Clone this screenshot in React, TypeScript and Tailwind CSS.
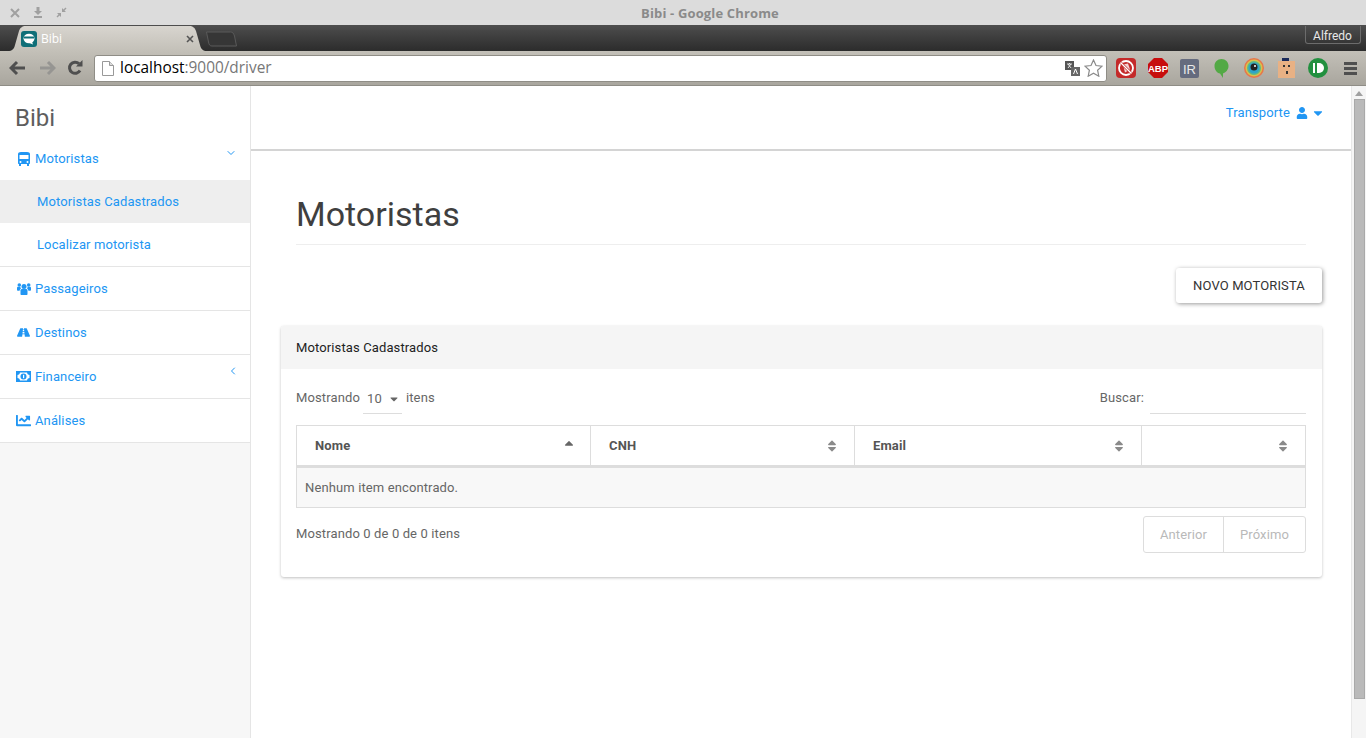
import { FaRoad, FaChartLine, FaUser, FaCaretDown, FaCaretUp, FaSort } from 'react-icons/fa';
import { FiChevronDown, FiChevronLeft } from 'react-icons/fi';
import { ReactNode } from 'react';

function WindowTitleBar() {
  return (
    <div className="relative flex h-[25px] items-center bg-[#dcdcdc] pl-[10px] text-[#9a9a9a]">
      <div className="flex items-center gap-[13px]">
        <svg width="10" height="10" viewBox="0 0 10 10"><path d="M1 1l8 8M9 1l-8 8" stroke="#a0a0a0" strokeWidth="2" /></svg>
        <svg width="10" height="11" viewBox="0 0 10 11"><path d="M3.500 0h3v4H9L5 8 1 4h2.500zM1 9h8v2H1z" fill="#a0a0a0" /></svg>
        <svg width="11" height="11" viewBox="0 0 11 11"><path d="M6 5V1l1.500 1.500L9.500 .5l1 1-2 2L10 5zM5 6v4L3.500 8.500l-2 2-1-1 2-2L1 6z" fill="#a0a0a0" /></svg>
      </div>
      <div className="absolute inset-x-0 top-0 flex h-[25px] items-center justify-center pl-[54px] pt-[2px] text-[13px] font-bold tracking-[0.15px] text-[#8a8a8a] font-['Open_Sans',sans-serif]">
        Bibi - Google Chrome
      </div>
    </div>
  );
}

function TabStrip() {
  return (
    <div className="flex h-[26px] items-end justify-between bg-gradient-to-b from-[#4e4e4e] to-[#2c2c2c] pl-[8px] pr-[5px]">
      <div className="flex items-end">
        <div className="relative flex h-[25px] w-[199px] items-center pl-[13px] pr-[13px]">
          <svg className="absolute inset-0" width="199" height="25" viewBox="0 0 199 25">
            <defs>
              <linearGradient id="tabfill" x1="0" y1="0" x2="0" y2="1">
                <stop offset="0" stopColor="#d8d5cf" />
                <stop offset="1" stopColor="#c3c0b8" />
              </linearGradient>
            </defs>
            <path d="M0 25c4 0 6-2 7-6L11 5c1-3 3-5 7-5h163c4 0 6 2 7 5l4 14c1 4 3 6 7 6z" fill="url(#tabfill)" />
          </svg>
          <svg className="relative" width="16" height="16" viewBox="0 0 16 16">
            <rect width="16" height="16" rx="3" fill="#0f6f78" />
            <ellipse cx="8" cy="7.500" rx="5.500" ry="4.800" fill="#fff" />
            <path d="M3 5.500h10v2H3z" fill="#0f6f78" />
            <path d="M6 11l6 2.500-1.500-4z" fill="#fff" />
          </svg>
          <span className="relative ml-[4px] flex-1 text-[12px] text-white font-['Open_Sans',sans-serif]">Bibi</span>
          <svg className="relative" width="8" height="8" viewBox="0 0 8 8"><path d="M1 1l6 6M7 1L1 7" stroke="#555" strokeWidth="1.600" /></svg>
        </div>
        <svg className="mb-[4px] ml-[-1px]" width="32" height="16" viewBox="0 0 32 16">
          <path d="M.5 1h24c2 0 3 1 4 4l2 10H6C4 15 3 14 2.500 11z" fill="#363636" stroke="#5a5a5a" />
        </svg>
      </div>
      <div className="mb-[7px] flex h-[18px] w-[56px] items-center justify-center rounded-b-[3px] border border-t-0 border-[#6c6c6c] pt-[2px] pr-[1px] text-[12px] text-[#e8e8e8]">
        Alfredo
      </div>
    </div>
  );
}

function NavIcons() {
  return (
    <div className="flex items-center pl-[9px]">
      <svg width="18" height="16" viewBox="0 0 18 16"><path d="M8 2L2 8l6 6M2 8h14" fill="none" stroke="#4f4f4f" strokeWidth="3" /></svg>
      <svg className="ml-[11px]" width="18" height="16" viewBox="0 0 18 16"><path d="M10 2l6 6-6 6M16 8H2" fill="none" stroke="#969592" strokeWidth="3" /></svg>
      <svg className="ml-[11px]" width="16" height="16" viewBox="0 0 16 16">
        <path d="M13 10.500A5.600 5.600 0 1 1 12 3.700" fill="none" stroke="#4f4f4f" strokeWidth="3" />
        <path d="M9 6.500h6.500V0z" fill="#4f4f4f" />
      </svg>
    </div>
  );
}

function ExtensionIcons() {
  return (
    <div className="flex items-center">
      <svg width="20" height="20" viewBox="0 0 20 20">
        <rect width="20" height="20" rx="4" fill="#c42a2a" />
        <circle cx="10" cy="10" r="7" fill="none" stroke="#fff" strokeWidth="1.800" />
        <path d="M7 6.500l5-1 2 6-5 3z" fill="#fff" opacity=".8" />
        <path d="M5 5l10 10" stroke="#c42a2a" strokeWidth="2.500" />
        <path d="M5 5l10 10" stroke="#fff" strokeWidth="1.200" />
      </svg>
      <svg className="ml-[12px]" width="20" height="20" viewBox="0 0 20 20">
        <path d="M6 0h8l6 6v8l-6 6H6l-6-6V6z" fill="#c70d0d" />
        <text x="10" y="13.500" textAnchor="middle" fontSize="9.500" fontWeight="700" fill="#fff" fontFamily="Liberation Sans, sans-serif">ABP</text>
      </svg>
      <svg className="ml-[12px]" width="19" height="19" viewBox="0 0 19 19">
        <rect width="19" height="19" rx="2" fill="#656b7e" />
        <text x="9.500" y="14.500" textAnchor="middle" fontSize="13" fill="#e9e9e9" fontFamily="Liberation Sans, sans-serif">IR</text>
      </svg>
      <svg className="ml-[15px]" width="15" height="20" viewBox="0 0 15 20">
        <path d="M7.500 1C11.500 1 14.500 4 14.500 8c0 4-3 6.500-5.500 7.500V20L6 15.500C3 15 .5 12 .5 8 .5 4 3.500 1 7.500 1z" fill="#53a945" />
      </svg>
      <svg className="ml-[15px]" width="20" height="20" viewBox="0 0 20 20">
        <circle cx="10" cy="10" r="10" fill="#e8764a" />
        <circle cx="10" cy="10" r="8.500" fill="#d8c24a" />
        <circle cx="10" cy="10" r="7" fill="#5cb88a" />
        <circle cx="10" cy="10" r="5.500" fill="#2fa4c8" />
        <circle cx="10" cy="9" r="3.500" fill="#222" />
        <circle cx="11" cy="8" r="1" fill="#fff" />
      </svg>
      <svg className="ml-[14px]" width="17" height="20" viewBox="0 0 17 20">
        <rect y="3" width="17" height="17" fill="#e8b184" />
        <rect x="4" y="0" width="7" height="3" fill="#1a2a5a" />
        <rect x="5" y="7" width="2" height="2" fill="#333" />
        <rect x="10" y="7" width="2" height="2" fill="#333" />
        <rect x="8" y="13" width="2" height="3" fill="#333" />
      </svg>
      <svg className="ml-[13px]" width="20" height="20" viewBox="0 0 20 20">
        <circle cx="10" cy="10" r="10" fill="#22903f" />
        <rect x="5" y="5" width="2" height="10" fill="#fff" />
        <path d="M9 5h2a5 5 0 0 1 0 10H9z" fill="#fff" />
      </svg>
      <div className="ml-[16px] flex w-[13px] flex-col gap-[2px]">
        <div className="h-[3px] bg-[#4f4f4f]" />
        <div className="h-[3px] bg-[#4f4f4f]" />
        <div className="h-[3px] bg-[#4f4f4f]" />
      </div>
    </div>
  );
}

function Toolbar() {
  return (
    <div className="flex h-[35px] items-center border-b border-[#8f8d86] bg-gradient-to-b from-[#c3c0b8] to-[#a9a69e] pr-[9px]">
      <NavIcons />
      <div className="ml-[11px] flex h-[27px] w-[1013px] items-center rounded-[3px] border border-[#8f8d86] bg-white pl-[7px] pr-[3px] font-['Open_Sans',sans-serif]">
        <svg width="12" height="15" viewBox="0 0 12 15"><path d="M.5.500h7l4 4v10H.500z" fill="#fff" stroke="#999" /><path d="M7.500.500v4h4" fill="#ddd" stroke="#999" /></svg>
        <div className="ml-[6px] flex-1 text-[15.400px] leading-none">
          <span className="text-black">localhost</span>
          <span className="text-[#777]">:9000/driver</span>
        </div>
        <svg width="15" height="15" viewBox="0 0 15 15">
          <rect width="9" height="9" fill="#555" />
          <rect x="6" y="6" width="9" height="9" fill="#666" />
          <path d="M2 3h5M4.500 2v1M3 7l3-4M3 3l3 4" stroke="#fff" strokeWidth=".8" />
          <path d="M8.500 13l2-5 2 5" stroke="#fff" fill="none" />
        </svg>
        <svg className="ml-[4px]" width="19" height="18" viewBox="0 0 19 18"><path d="M9.500 1l2.500 5.500 6 .7-4.400 4 1.200 6-5.300-3-5.300 3 1.200-6L1 7.200l6-.7z" fill="#fff" stroke="#8a8a8a" strokeWidth="1.200" /></svg>
      </div>
      <div className="flex-1" />
      <ExtensionIcons />
    </div>
  );
}

function BusIcon() {
  return (
    <svg width="12" height="14" viewBox="0 0 12 14">
      <path fillRule="evenodd" d="M3 0h6c1.800 0 3 .8 3 2v9c0 .6-.4 1-1 1v2H9v-2H3v2H1v-2c-.6 0-1-.4-1-1V2C0 .8 1.200 0 3 0zM1.500 3v4h9V3zM2.500 9a1 1 0 1 0 0 2 1 1 0 0 0 0-2zm7 0a1 1 0 1 0 0 2 1 1 0 0 0 0-2z" fill="#2196f3" />
    </svg>
  );
}

function UsersIcon() {
  return (
    <svg width="14" height="12" viewBox="0 0 14 12" fill="#2196f3">
      <circle cx="7" cy="3.500" r="2.500" />
      <circle cx="2.300" cy="2" r="1.800" />
      <circle cx="11.700" cy="2" r="1.800" />
      <path d="M3.500 7.500c0-1 .8-1.500 1.500-1.500h4c.7 0 1.500.5 1.500 1.500V11c0 .6-.4 1-1 1h-5c-.6 0-1-.4-1-1z" />
      <path d="M0 5c0-.8.500-1.200 1.200-1.200h2.300c-.2.800 0 1.500.5 2-.8.300-1.300 1-1.400 2H.8C.3 7.800 0 7.500 0 7zM14 5c0-.8-.5-1.200-1.200-1.200h-2.300c.2.800 0 1.500-.5 2 .8.300 1.300 1 1.400 2h1.800c.5 0 .8-.3.800-.8z" />
    </svg>
  );
}

function MoneyIcon() {
  return (
    <svg width="15" height="11" viewBox="0 0 15 11">
      <rect x=".75" y=".75" width="13.500" height="9.500" fill="#fff" stroke="#2196f3" strokeWidth="1.500" />
      <path d="M1 1h3a3 3 0 0 1-3 3zM14 1h-3a3 3 0 0 0 3 3zM1 10h3a3 3 0 0 0-3-3zM14 10h-3a3 3 0 0 1 3-3z" fill="#2196f3" />
      <circle cx="7.500" cy="5.500" r="3" fill="#2196f3" />
      <rect x="7" y="3.800" width="1.200" height="3.400" fill="#fff" />
    </svg>
  );
}

function NavRow({ icon, label, caret }: { icon: ReactNode; label: string; caret?: ReactNode }) {
  return (
    <div className="relative flex h-[44px] items-center border-b border-[#e5e5e5] pl-[16px] text-[#2196f3]">
      <span className="flex w-[19px] items-center text-[14px]">{icon}</span>
      {label}
      {caret}
    </div>
  );
}

function Sidebar() {
  return (
    <div className="flex w-[251px] shrink-0 flex-col border-r border-[#e5e5e5] bg-[#f7f7f7] text-[13px] tracking-[0.12px]">
      <div className="bg-white">
        <div className="flex h-[51px] items-end pl-[15px] text-[24px] leading-[28px] tracking-normal text-[#5e5e5e]">
          <span className="pb-[5px]">Bibi</span>
        </div>
        <div className="relative flex h-[43px] items-center pl-[18px] text-[#2196f3]">
          <span className="flex w-[17px] items-center"><BusIcon /></span>
          Motoristas
          <FiChevronDown className="absolute right-[13px] top-[10px] text-[12px]" />
        </div>
        <div className="flex h-[43px] items-center bg-[#eeeeee] pl-[37px] text-[#2196f3]">Motoristas Cadastrados</div>
        <div className="flex h-[44px] items-center border-b border-[#e5e5e5] pl-[37px] text-[#2196f3]">Localizar motorista</div>
        <NavRow icon={<span className="ml-[1px]"><UsersIcon /></span>} label="Passageiros" />
        <NavRow icon={<span className="ml-[1px] text-[13px]"><FaRoad /></span>} label="Destinos" />
        <NavRow icon={<MoneyIcon />} label="Financeiro" caret={<FiChevronLeft className="absolute right-[11px] top-[10px] text-[12px]" />} />
        <NavRow icon={<span className="text-[15px]"><FaChartLine /></span>} label="Análises" />
      </div>
    </div>
  );
}

function SortHeader({ label, width, active }: { label?: string; width: string; active?: boolean }) {
  return (
    <div className={`flex h-full items-center justify-between border-r border-[#dddddd] pl-[18px] pr-[15px] last:border-r-0 font-bold ${width}`}>
      <span>{label}</span>
      {active ? <FaCaretUp className="mb-[6px] mr-[-1px] text-[14px] text-[#666]" /> : <FaSort className="text-[14px] text-[#8a8a8a]" />}
    </div>
  );
}

function DriversCard() {
  return (
    <div className="ml-[30px] mr-[29px] mt-[23px] rounded-[3px] bg-white shadow-[0_1px_3px_rgba(0,0,0,0.25)]">
      <div className="flex h-[43px] items-center rounded-t-[3px] bg-[#f5f5f5] pl-[15px] text-[13px] tracking-[0.12px] text-[#222]">Motoristas Cadastrados</div>
      <div className="pb-[24px] pl-[15px] pr-[16px] text-[13px] tracking-[0.12px] text-[#666]">
        <div className="flex h-[45px] items-end justify-between">
          <div className="flex items-center">
            <span>Mostrando</span>
            <div className="ml-[3px] mr-[4px] flex h-[32px] w-[39px] items-center justify-between border-b border-[#dddddd] pl-[4px] pr-[2px] pt-[2px]">
              10 <FaCaretDown className="text-[12px]" />
            </div>
            <span>itens</span>
          </div>
          <div className="flex items-center">
            <span>Buscar:</span>
            <div className="ml-[6px] h-[32px] w-[156px] border-b border-[#dddddd]" />
          </div>
        </div>
        <div className="mt-[11px] border border-[#dddddd]">
          <div className="flex h-[42px] border-b-[3px] border-[#dddddd] text-[#555]">
            <SortHeader label="Nome" width="w-[294px]" active />
            <SortHeader label="CNH" width="w-[264px]" />
            <SortHeader label="Email" width="w-[287px]" />
            <SortHeader width="flex-1" />
          </div>
          <div className="flex h-[39px] items-center bg-[#f8f8f8] pl-[8px]">Nenhum item encontrado.</div>
        </div>
        <div className="mt-[8px] flex items-start justify-between">
          <div className="pt-[8px]">Mostrando 0 de 0 de 0 itens</div>
          <div className="flex h-[37px] rounded-[3px] border border-[#dddddd] text-[#b9b9b9]">
            <div className="flex w-[80px] items-center justify-center border-r border-[#dddddd]">Anterior</div>
            <div className="flex w-[81px] items-center justify-center">Próximo</div>
          </div>
        </div>
      </div>
    </div>
  );
}

function MainContent() {
  return (
    <div className="flex min-w-0 flex-1 flex-col bg-white">
      <div className="flex h-[65px] items-start justify-end border-b-2 border-[#d4d4d4] pr-[26px] pt-[17px] text-[13px] text-[#2196f3]">
        <span className="flex items-center tracking-[0.12px]">
          Transporte <FaUser className="ml-[6px] text-[12px]" /> <FaCaretDown className="ml-[3px] text-[14px]" />
        </span>
      </div>
      <div className="pl-[45px] pr-[45px] pt-[40px]">
        <h1 className="border-b border-[#eeeeee] pb-[6px] text-[34px] leading-[47px] text-[#3f3f3f]">Motoristas</h1>
      </div>
      <div className="mr-[29px] mt-[23px] flex justify-end">
        <div className="flex h-[35px] w-[146px] items-center justify-center rounded-[3px] bg-white text-[13px] tracking-[0.12px] text-[#333] shadow-[1px_1px_4px_rgba(0,0,0,0.4)]">
          NOVO MOTORISTA
        </div>
      </div>
      <DriversCard />
    </div>
  );
}

function Scrollbar() {
  return (
    <div className="flex w-[15px] shrink-0 flex-col items-center border-l border-[#e8e8e8] bg-[#f5f5f5]">
      <div className="mt-[5px] h-0 w-0 border-x-[4px] border-b-[5px] border-x-transparent border-b-[#a0a0a0]" />
      <div className="ml-[1px] mt-[3px] h-[600px] w-[11px] border border-[#a9a9a9] bg-[#bababa]" />
    </div>
  );
}

export default function App() {
  return (
    <div className="flex h-[738px] w-[1366px] flex-col overflow-hidden bg-white font-['Roboto',sans-serif]">
      <WindowTitleBar />
      <TabStrip />
      <Toolbar />
      <div className="flex min-h-0 flex-1">
        <Sidebar />
        <MainContent />
        <Scrollbar />
      </div>
    </div>
  );
}
